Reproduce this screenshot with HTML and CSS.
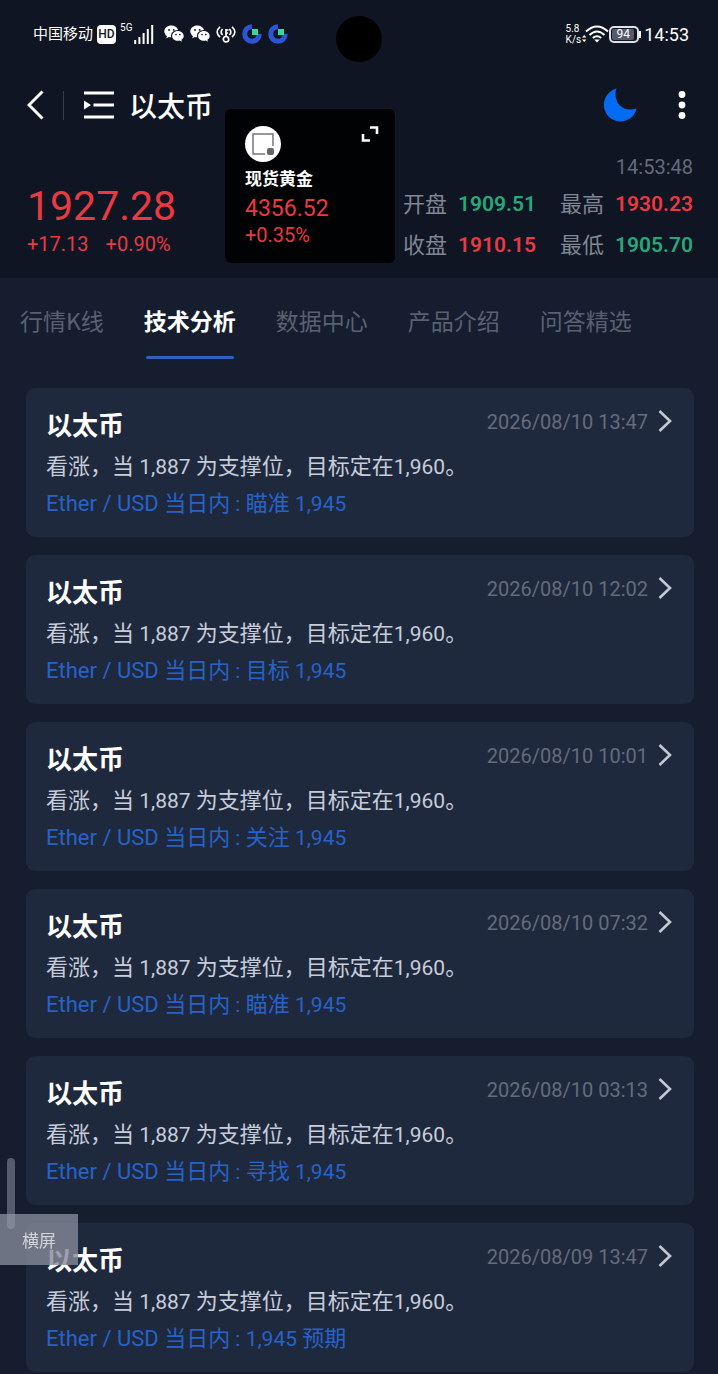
FILE: index.html
```
<!DOCTYPE html>
<html lang="zh-CN">
<head>
    <meta charset="UTF-8">
    <meta name="viewport" content="width=device-width, initial-scale=1.0">
    <title>以太币</title>
    <link rel="stylesheet" href="styles.css">
</head>
<body>

    <!-- shared icons -->
    <svg class="defs" aria-hidden="true">
        <symbol id="wechat" viewBox="0 0 19 17">
            <path fill="#fff" d="M7 0.5C3.2 0.5 0.3 3 0.3 6.1c0 1.8 1 3.3 2.5 4.4L2.2 12.6l2.4-1.3c.7.2 1.4.3 2.2.3C6 7.600 9 4.700 13.300 4.700 12.600 2.200 10 .5 7 .5z"/>
            <path fill="#fff" d="M18.700 10.300c0-2.600-2.500-4.700-5.500-4.700s-5.500 2.100-5.500 4.700 2.500 4.700 5.500 4.700c.7 0 1.300-.1 1.900-.3l1.900 1.100-.5-1.800c1.300-.9 2.200-2.200 2.200-3.700z"/>
            <g fill="#0f1522"><circle cx="4.800" cy="4.600" r="0.900"/><circle cx="9.200" cy="4.600" r="0.900"/><circle cx="11.400" cy="9" r="0.800"/><circle cx="15" cy="9" r="0.800"/></g>
        </symbol>
        <symbol id="ring" viewBox="0 0 20 20">
            <path d="M10 2.700A7.300 7.300 0 1 0 17.300 10" fill="none" stroke="#2b55d4" stroke-width="5"/>
            <rect x="10" y="5" width="6" height="6" fill="#2fdca0"/>
        </symbol>
        <symbol id="arrow" viewBox="0 0 14 24">
            <path d="M1.500 2 12 12 1.500 22" fill="none" stroke="#c3c8d2" stroke-width="2.600"/>
        </symbol>
    </svg>

    <header class="header">
        <div class="status">
            <span class="carrier">中国移动</span>
            <span class="hd">HD</span>
            <span class="net">5G</span>
            <svg class="signal" width="20" height="20" viewBox="0 0 20 20"><path d="M1.200 20v-4M5.400 20v-7M9.600 20V9M13.800 20V5M18.200 20V1" stroke="#fff" stroke-width="2"/></svg>
            <div class="apps">
                <svg width="20" height="18"><use href="#wechat"/></svg>
                <svg width="20" height="18"><use href="#wechat"/></svg>
                <svg width="20" height="17" viewBox="0 0 20 17" fill="none" stroke="#fff" stroke-width="1.700">
                    <path d="M4 .8C.2 4 .2 8 4 11.200M16 .8c3.800 3.200 3.800 7.200 0 10.400M6.600 3C4.800 5 4.800 7.200 6.600 9M13.400 3c1.800 2 1.800 4.200 0 6M10 10.500V3M10 4h2.600M10 7h2"/>
                    <circle cx="10" cy="13.200" r="2.700"/>
                </svg>
                <svg width="20" height="20"><use href="#ring"/></svg>
                <svg width="20" height="20"><use href="#ring"/></svg>
            </div>
            <span class="camera"></span>
            <div class="status-right">
                <div class="speed">5.8<br>K/s</div>
                <svg width="28" height="20" viewBox="0 0 28 20">
                    <g fill="none" stroke="#fff" stroke-width="2"><path d="M5 7.500Q16 -2.500 27 7.500M8.500 11Q16 4 23.500 11M11.800 14Q16 10.500 20.200 14"/></g>
                    <path d="M13.200 15.500h5.600L16 18.500zM1 13.500 3.200 11l2.200 2.500zM1 15.500h4.400L3.200 18z" fill="#fff"/>
                </svg>
                <div class="battery"><span>94</span></div>
                <span class="clock">14:53</span>
            </div>
        </div>

        <div class="topbar">
            <button class="icon-btn back" aria-label="返回"><svg width="18" height="30" viewBox="0 0 18 30"><path d="M15.500 1.500 2 15l13.500 13.500" fill="none" stroke="#fff" stroke-width="3"/></svg></button>
            <span class="divider"></span>
            <button class="icon-btn menu" aria-label="列表"><svg width="32" height="28" viewBox="0 0 32 28"><path d="M1 2h30M10.500 14H31M1 26h30" stroke="#fff" stroke-width="3"/><path d="M1 9.500 8 14l-7 4.500z" fill="#fff"/></svg></button>
            <h1>以太币</h1>
            <button class="icon-btn moon" aria-label="夜间模式"><svg width="34" height="34" viewBox="0 0 34 34"><path d="M13.500.5C4 3.500-1 12.500 1.600 21.500 4 30 12.500 34.800 21 33c6.500-1.400 11-6 12.600-12.500C27.500 22.500 20.500 21.600 16.500 17 12.500 12.500 11.500 6 13.500.5z" fill="#046cf0"/></svg></button>
            <button class="icon-btn more" aria-label="更多"><svg width="8" height="28" viewBox="0 0 8 28" fill="#fff"><circle cx="4" cy="3.500" r="3.400"/><circle cx="4" cy="14" r="3.400"/><circle cx="4" cy="24.500" r="3.400"/></svg></button>
        </div>

        <div class="quote">
            <div class="price">
                <div class="last">1927.28</div>
                <div class="change"><span>+17.13</span><span>+0.90%</span></div>
            </div>
            <div class="detail">
                <div class="time">14:53:48</div>
                <dl>
                    <dt>开盘</dt><dd class="green">1909.51</dd>
                    <dt>最高</dt><dd class="red">1930.23</dd>
                    <dt>收盘</dt><dd class="red">1910.15</dd>
                    <dt>最低</dt><dd class="green">1905.70</dd>
                </dl>
            </div>
        </div>
    </header>

    <nav class="tabs">
        <a href="#">行情K线</a>
        <a href="#" class="active">技术分析</a>
        <a href="#">数据中心</a>
        <a href="#">产品介绍</a>
        <a href="#">问答精选</a>
    </nav>

    <main class="list">
        <a class="card" href="#">
            <div class="card-head"><h2>以太币</h2><time>2026/08/10 13:47</time><svg width="14" height="24"><use href="#arrow"/></svg></div>
            <p>看涨，当<span class="num"> 1,887 </span>为支撑位，目标定在<span class="num">1,960</span>。</p>
            <p class="target">Ether / USD 当日内<span class="num"> : </span>瞄准<span class="num"> 1,945</span></p>
        </a>
        <a class="card" href="#">
            <div class="card-head"><h2>以太币</h2><time>2026/08/10 12:02</time><svg width="14" height="24"><use href="#arrow"/></svg></div>
            <p>看涨，当<span class="num"> 1,887 </span>为支撑位，目标定在<span class="num">1,960</span>。</p>
            <p class="target">Ether / USD 当日内<span class="num"> : </span>目标<span class="num"> 1,945</span></p>
        </a>
        <a class="card" href="#">
            <div class="card-head"><h2>以太币</h2><time>2026/08/10 10:01</time><svg width="14" height="24"><use href="#arrow"/></svg></div>
            <p>看涨，当<span class="num"> 1,887 </span>为支撑位，目标定在<span class="num">1,960</span>。</p>
            <p class="target">Ether / USD 当日内<span class="num"> : </span>关注<span class="num"> 1,945</span></p>
        </a>
        <a class="card" href="#">
            <div class="card-head"><h2>以太币</h2><time>2026/08/10 07:32</time><svg width="14" height="24"><use href="#arrow"/></svg></div>
            <p>看涨，当<span class="num"> 1,887 </span>为支撑位，目标定在<span class="num">1,960</span>。</p>
            <p class="target">Ether / USD 当日内<span class="num"> : </span>瞄准<span class="num"> 1,945</span></p>
        </a>
        <a class="card" href="#">
            <div class="card-head"><h2>以太币</h2><time>2026/08/10 03:13</time><svg width="14" height="24"><use href="#arrow"/></svg></div>
            <p>看涨，当<span class="num"> 1,887 </span>为支撑位，目标定在<span class="num">1,960</span>。</p>
            <p class="target">Ether / USD 当日内<span class="num"> : </span>寻找<span class="num"> 1,945</span></p>
        </a>
        <a class="card" href="#">
            <div class="card-head"><h2>以太币</h2><time>2026/08/09 13:47</time><svg width="14" height="24"><use href="#arrow"/></svg></div>
            <p>看涨，当<span class="num"> 1,887 </span>为支撑位，目标定在<span class="num">1,960</span>。</p>
            <p class="target">Ether / USD 当日内<span class="num"> : 1,945 </span>预期</p>
        </a>
    </main>

    <!-- floating quote window -->
    <aside class="float">
        <div class="float-top">
            <svg width="36" height="36" viewBox="0 0 36 36"><circle cx="18" cy="18" r="18" fill="#fff"/><path d="M20 28H8V8h20v12" fill="none" stroke="#777" stroke-width="1.500"/><rect x="22" y="22" width="7" height="7" rx="2" fill="#666"/></svg>
            <button class="icon-btn" aria-label="展开"><svg width="18" height="16" viewBox="0 0 18 16"><path d="M9 1.500h7V8M2 8v6.500h7" fill="none" stroke="#fff" stroke-width="2.600"/></svg></button>
        </div>
        <div class="float-name">现货黄金</div>
        <div class="float-price">4356.52</div>
        <div class="float-change">+0.35%</div>
    </aside>

    <button class="rotate">横屏</button>
    <span class="thumb"></span>

</body>
</html>
```
FILE: styles.css
```
* { box-sizing: border-box; }
body { margin: 0; background-color: #151d2e; color: #fff; font-family: Roboto, "Noto Sans CJK SC", sans-serif; }
h1, h2, p, dl, dd { margin: 0; }
a { color: inherit; text-decoration: none; }
svg { display: block; flex: none; }
.defs { position: absolute; width: 0; height: 0; }
.icon-btn { background: none; border: none; padding: 0; cursor: pointer; }
.red { color: #ea3943; }
.green { color: #27a87b; }

.header { background-color: #0f1522; height: 278px; }

/* status bar */
.status { position: relative; display: flex; align-items: center; height: 68px; padding: 0 29px 0 33px; }
.carrier { font-size: 15px; line-height: 20px; }
.hd { width: 19px; height: 19px; margin-left: 4px; border-radius: 4px; background: #fff; color: #0f1522; font-size: 12px; font-weight: 500; line-height: 19px; text-align: center; }
.net { margin: 0 1px 14px 4px; font-size: 10px; }
.signal { margin-left: 1px; }
.apps { display: flex; align-items: center; gap: 6px; margin-left: 10px; }
.camera { position: absolute; left: 50%; top: 16px; width: 46px; height: 46px; margin-left: -23px; border-radius: 50%; background: #000; }
.status-right { display: flex; align-items: center; margin-left: auto; }
.speed { font-size: 10px; line-height: 11px; }
.battery { position: relative; width: 30px; height: 17px; margin: 0 5px 0 0; padding: 1px; border: 2px solid #dfe2e8; border-radius: 5px; font-size: 12px; line-height: 11px; text-align: center; }
.battery span { display: block; width: 22px; background: #555b68; border-radius: 2px; }
.battery::after { content: ""; position: absolute; right: -4px; top: 3px; width: 2px; height: 7px; background: #fff; }
.clock { font-size: 18px; }

/* title bar */
.topbar { display: flex; align-items: center; height: 74px; padding: 0 32px 0 27px; }
.divider { width: 1px; height: 29px; margin: 0 19px 0 18px; background: #343b49; }
.topbar h1 { margin-left: 14px; font-size: 28px; font-weight: 500; }
.moon { margin-left: auto; }
.more { margin-left: 41px; }

.quote { display: flex; justify-content: space-between; padding: 11px 25px 0 27px; }
.last { margin-top: 27px; color: #ea3943; font-size: 41px; line-height: 52px; }
.change { display: flex; gap: 17px; color: #ea3943; font-size: 20px; line-height: 24px; }
.time { color: #646b79; font-size: 20px; line-height: 28px; text-align: right; }
.detail dl { display: grid; grid-template-columns: auto auto auto auto; line-height: 41px; margin-top: 3px; }
.detail dt { margin-right: 11px; color: #7f8694; font-size: 22px; }
.detail dd { font-size: 21px; font-weight: 600; }
.detail dd:nth-of-type(odd) { margin-right: 24px; }

/* tabs */
.tabs { display: flex; gap: 40px; padding: 19px 20px 29px; color: #596171; font-family: "Noto Sans CJK SC", sans-serif; font-size: 23px; line-height: 46px; }
.tabs a { height: 62px; white-space: nowrap; }
.tabs .active { position: relative; color: #fff; font-weight: 700; }
.tabs .active::after { content: ""; position: absolute; left: 2px; right: 2px; bottom: 0; height: 3px; border-radius: 2px; background: #2f62c0; }

/* analysis cards */
.list { display: flex; flex-direction: column; gap: 18px; padding: 0 24px 2px 26px; }
.card { padding: 20px 22px 15px 20px; border-radius: 9px; background: #1f293e; color: #c7cdda; font-size: 22px; line-height: 37px; }
.card p { height: 37px; }
.card .num { font-size: 21px; }
.card-head { display: flex; align-items: flex-start; height: 40px; }
.card-head h2 { margin-right: auto; color: #fff; font-size: 26px; font-weight: 700; line-height: 36px; }
.card-head time { margin-right: 10px; color: #646c7c; font-size: 20px; line-height: 28px; }
.card-head svg { margin-top: 1px; }
.card .target { color: #2762c8; }

.float { position: absolute; left: 225px; top: 109px; width: 170px; height: 154px; padding: 17px 16px 0 20px; border-radius: 6px; background: #010204; }
.float-top { display: flex; justify-content: space-between; align-items: flex-start; }
.float-name { font-size: 17px; font-weight: 700; line-height: 35px; }
.float-price { color: #ea3943; font-size: 23px; line-height: 24px; }
.float-change { color: #ea3943; font-size: 20px; line-height: 28px; }

.rotate { position: fixed; left: 0; bottom: 109px; width: 78px; height: 51px; border: none; background: rgba(132, 137, 152, 0.8); color: #d0d3da; font-family: "Noto Sans CJK SC", sans-serif; font-size: 17px; }
.thumb { position: fixed; left: 7px; bottom: 145px; width: 8px; height: 71px; border-radius: 4px; background: rgba(150, 155, 168, 0.5); }
```
